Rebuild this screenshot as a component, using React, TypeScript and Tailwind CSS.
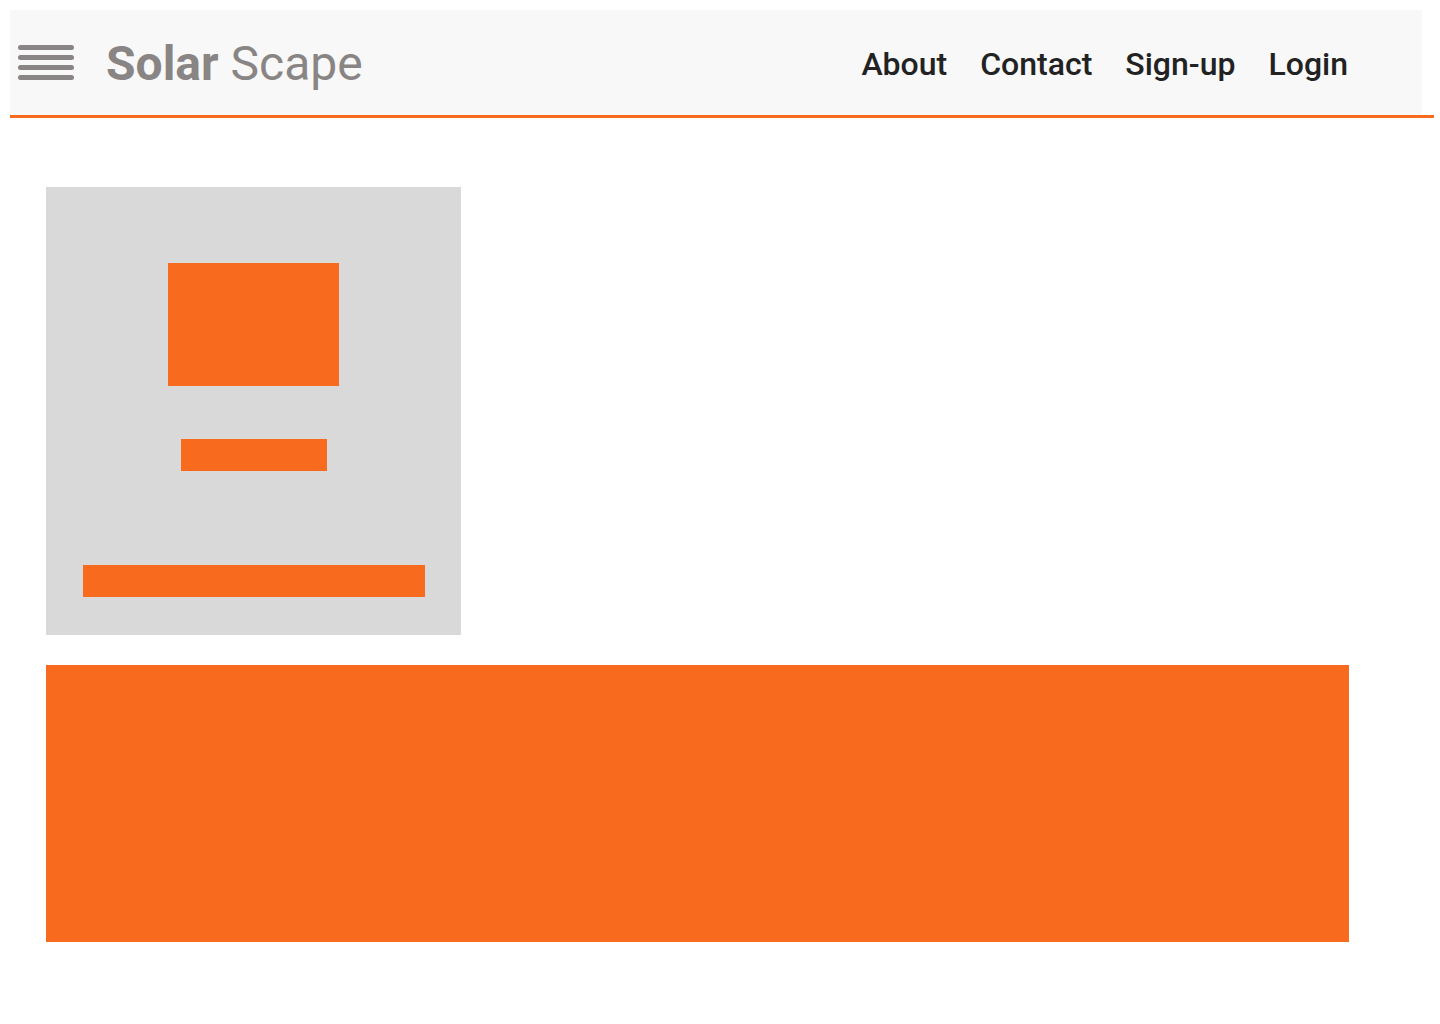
export default function App() {
  return (
    <div className="min-h-screen bg-white" style={{ fontFamily: 'Roboto, "Liberation Sans", sans-serif' }}>
      {/* Header */}
      <header className="ml-[10px] pt-[10px] w-[1424px] border-b-[3px] border-[#f86b1e]">
        <div className="w-[1412px] h-[105px] bg-[#f8f8f8] flex items-center">
          <button className="ml-[8px] flex flex-col gap-[5.5px]" aria-label="Menu">
            <span className="block w-[56px] h-[4.5px] rounded-full bg-[#898584]" />
            <span className="block w-[56px] h-[4.5px] rounded-full bg-[#898584]" />
            <span className="block w-[56px] h-[4.5px] rounded-full bg-[#898584]" />
            <span className="block w-[56px] h-[4.5px] rounded-full bg-[#898584]" />
          </button>
          <div className="ml-[32px] mt-[2px] text-[48px] leading-none text-[#898584]">
            <span className="font-bold">Solar</span> <span>Scape</span>
          </div>
          <nav className="ml-auto mr-[74px] mt-[2px] flex items-center gap-[33px] text-[32px] font-medium text-[#222222]">
            <a href="#">About</a>
            <a href="#">Contact</a>
            <a href="#">Sign-up</a>
            <a href="#">Login</a>
          </nav>
        </div>
      </header>

      <main className="pl-[46px] pt-[69px]">
        {/* Card */}
        <div className="w-[415px] h-[448px] bg-[#d9d9d9] flex flex-col items-center pt-[76px]">
          <div className="w-[171px] h-[123px] bg-[#f86b1e]" />
          <div className="mt-[53px] w-[146px] h-[32px] bg-[#f86b1e]" />
          <div className="mt-[94px] w-[342px] h-[32px] bg-[#f86b1e]" />
        </div>

        {/* Banner */}
        <div className="mt-[30px] w-[1303px] h-[277px] bg-[#f86b1e]" />
      </main>
    </div>
  );
}
